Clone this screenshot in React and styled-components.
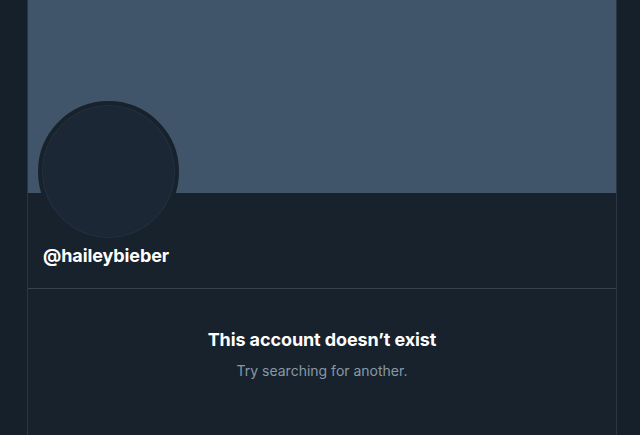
import React from 'react';
import styled, { createGlobalStyle } from 'styled-components';

const GlobalStyle = createGlobalStyle`
  html, body {
    margin: 0;
    padding: 0;
    background: #16202a;
    font-family: Inter, "Noto Sans", sans-serif;
    height: 100%;
    overflow: hidden;
  }
`;

const Page = styled.div`
  display: flex;
  height: 435px;
  padding-left: 27px;
`;

const Column = styled.main`
  width: 588px;
  border-left: 1px solid #2b3640;
  border-right: 1px solid #2b3640;
  background: #18222d;
  display: flex;
  flex-direction: column;
`;

const Banner = styled.div`
  height: 193px;
  background: #405569;
`;

const ProfileHead = styled.div`
  display: flex;
  flex-direction: column;
  padding: 0 0 20px 10px;
  border-bottom: 1px solid #38444d;
`;

const Avatar = styled.div`
  width: 133px;
  height: 133px;
  margin-top: -92px;
  border-radius: 50%;
  border: 4px solid #18222d;
  background: #1b2735;
  box-shadow: inset 0 0 0 1px #24313f;
`;

const Handle = styled.h2`
  margin: 2px 0 0 5px;
  font-size: 18px;
  font-weight: 700;
  color: #ffffff;
  line-height: 24px;
  letter-spacing: -0.1px;
`;

const Empty = styled.section`
  display: flex;
  flex-direction: column;
  align-items: center;
  padding-top: 38px;
`;

const Title = styled.h3`
  margin: 0;
  font-size: 18px;
  font-weight: 700;
  color: #ffffff;
  line-height: 26px;
  letter-spacing: -0.1px;
`;

const Sub = styled.p`
  margin: 8px 0 0;
  font-size: 14px;
  color: #8899a6;
  line-height: 20px;
`;

export default function App() {
  return (
    <>
      <GlobalStyle />
      <Page>
        <Column>
          <Banner />
          <ProfileHead>
            <Avatar />
            <Handle>@haileybieber</Handle>
          </ProfileHead>
          <Empty>
            <Title>This account doesn’t exist</Title>
            <Sub>Try searching for another.</Sub>
          </Empty>
        </Column>
      </Page>
    </>
  );
}
